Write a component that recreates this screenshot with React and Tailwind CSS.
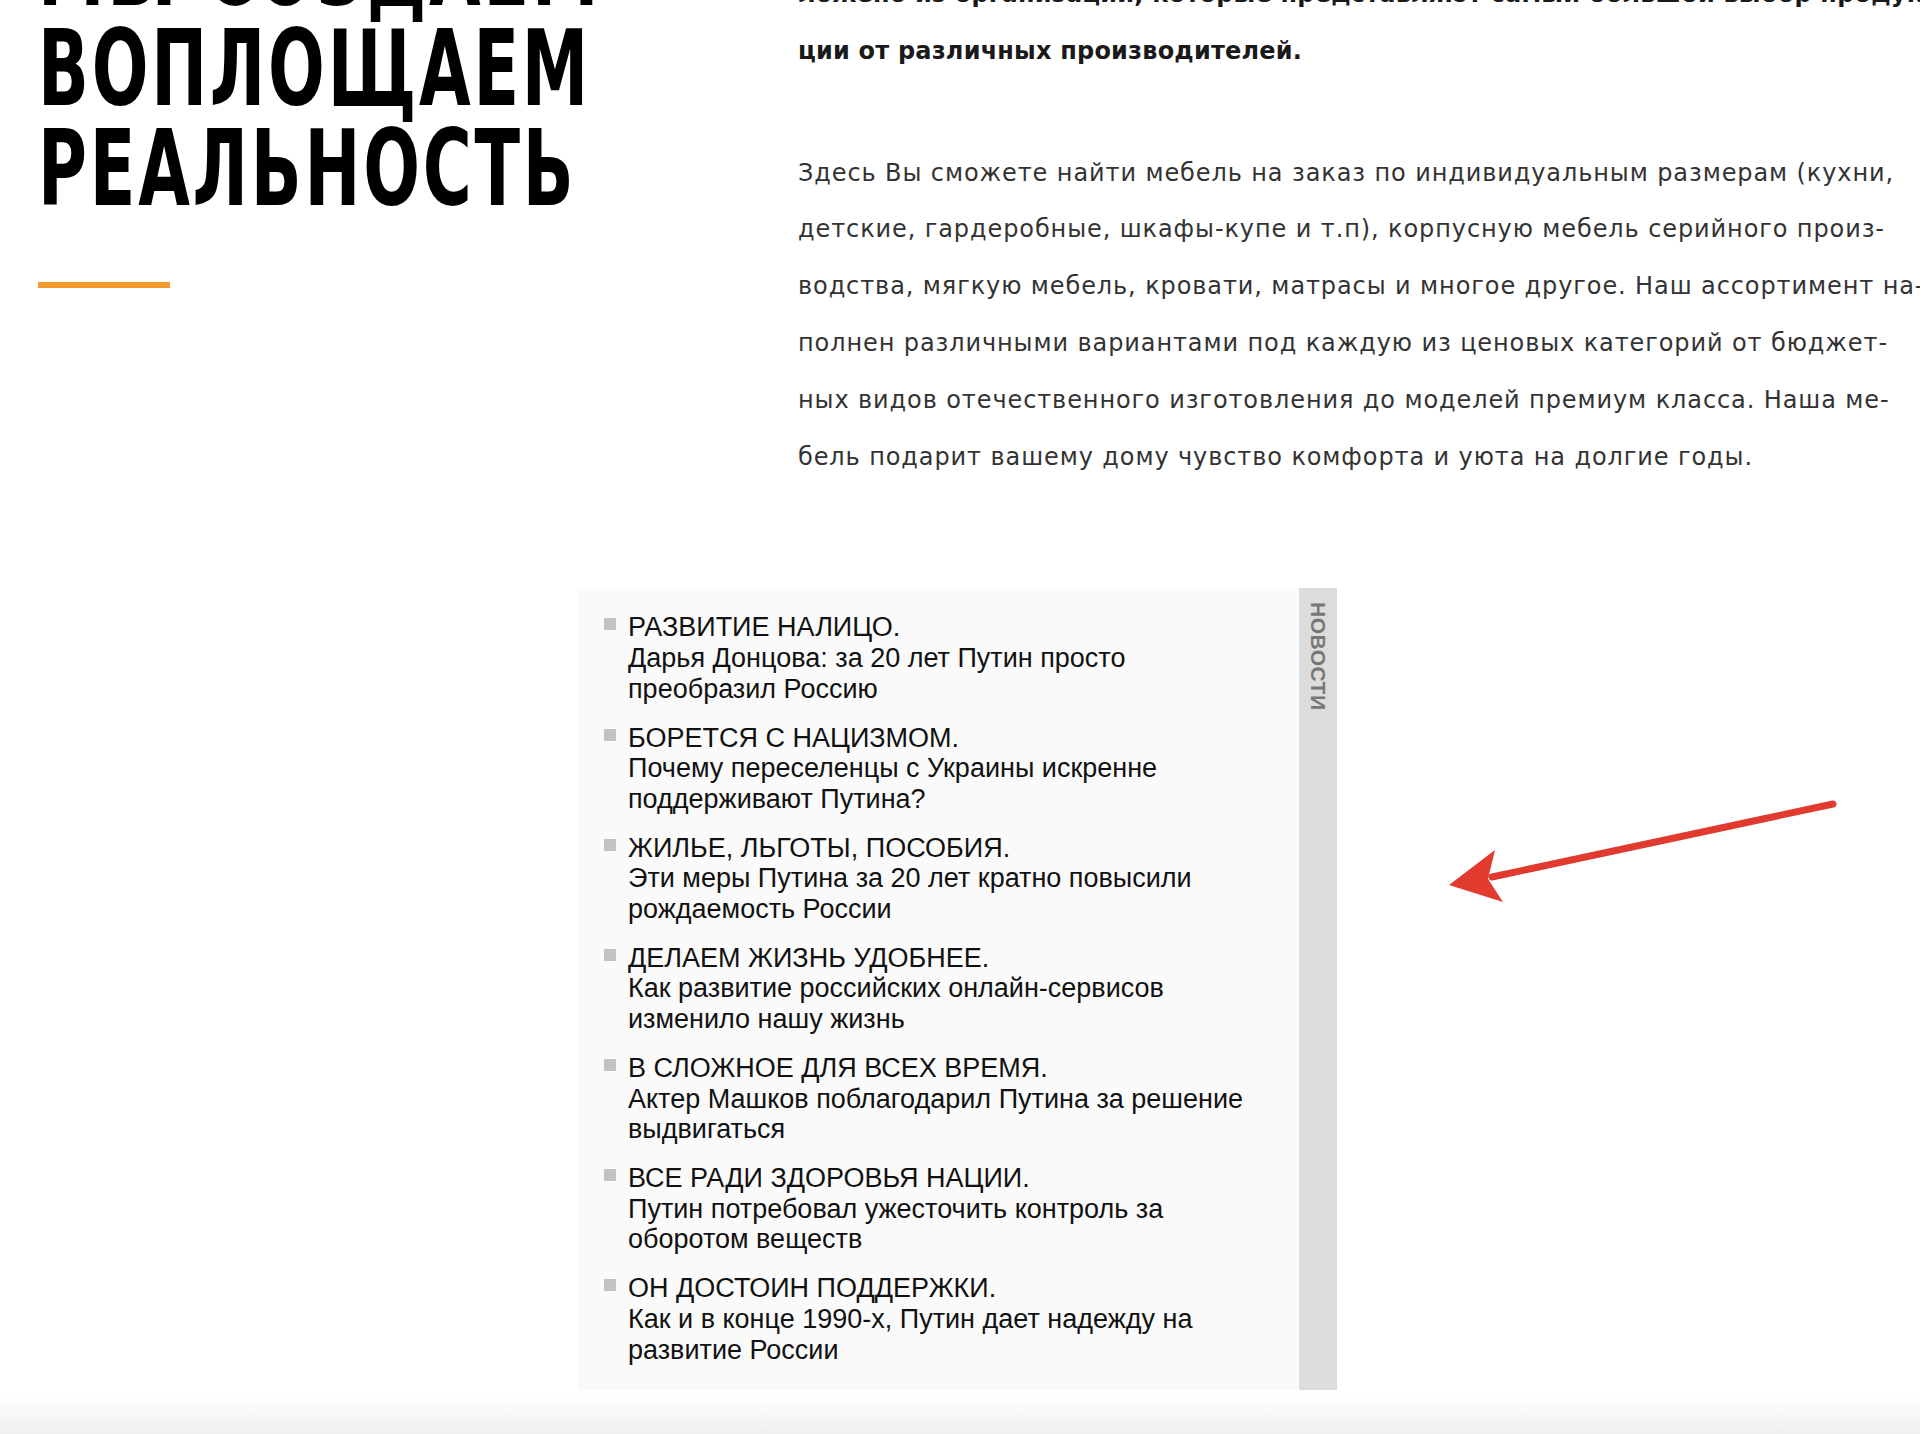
import React from 'react';

const news = [
  { title: 'РАЗВИТИЕ НАЛИЦО.', lines: ['Дарья Донцова: за 20 лет Путин просто', 'преобразил Россию'] },
  { title: 'БОРЕТСЯ С НАЦИЗМОМ.', lines: ['Почему переселенцы с Украины искренне', 'поддерживают Путина?'] },
  { title: 'ЖИЛЬЕ, ЛЬГОТЫ, ПОСОБИЯ.', lines: ['Эти меры Путина за 20 лет кратно повысили', 'рождаемость России'] },
  { title: 'ДЕЛАЕМ ЖИЗНЬ УДОБНЕЕ.', lines: ['Как развитие российских онлайн-сервисов', 'изменило нашу жизнь'] },
  { title: 'В СЛОЖНОЕ ДЛЯ ВСЕХ ВРЕМЯ.', lines: ['Актер Машков поблагодарил Путина за решение', 'выдвигаться'] },
  { title: 'ВСЕ РАДИ ЗДОРОВЬЯ НАЦИИ.', lines: ['Путин потребовал ужесточить контроль за', 'оборотом веществ'] },
  { title: 'ОН ДОСТОИН ПОДДЕРЖКИ.', lines: ['Как и в конце 1990-х, Путин дает надежду на', 'развитие России'] },
];

const intro = [
  'ложено из организаций, которые представляют самый большой выбор продук-',
  'ции от различных производителей.',
];

const about = [
  'Здесь Вы сможете найти мебель на заказ по индивидуальным размерам (кухни,',
  'детские, гардеробные, шкафы-купе и т.п), корпусную мебель серийного произ-',
  'водства, мягкую мебель, кровати, матрасы и многое другое. Наш ассортимент на-',
  'полнен различными вариантами под каждую из ценовых категорий от бюджет-',
  'ных видов отечественного изготовления до моделей премиум класса. Наша ме-',
  'бель подарит вашему дому чувство комфорта и уюта на долгие годы.',
];

function NewsWidget() {
  return (
    <div className="ml-[578px] flex w-[759px] bg-[#fafafa] font-['Liberation_Sans',Arial,sans-serif] text-[27px] leading-[30.6px] text-[#111]">
      <ul className="flex-1 space-y-[18.4px] pt-[24px] pb-[25px] pl-[26px]">
        {news.map((item) => (
          <li key={item.title} className="flex items-start gap-[12px]">
            <span className="mt-[6px] h-[12px] w-[12px] shrink-0 bg-[#c2c2c2]" />
            <div className="whitespace-nowrap">
              <div>{item.title}</div>
              {item.lines.map((l) => (
                <div key={l}>{l}</div>
              ))}
            </div>
          </li>
        ))}
      </ul>
      {/* side label strip */}
      <div className="flex w-[38px] shrink-0 justify-center bg-[#dcdcdc] pt-[14px]">
        <span className="text-[21px] font-bold leading-none tracking-[0.5px] text-[#777] [writing-mode:vertical-rl]">
          НОВОСТИ
        </span>
      </div>
    </div>
  );
}

export default function App() {
  return (
    <div className="relative min-h-[1434px] overflow-hidden bg-white">
      <div className="flex items-start">
        <div className="-mt-[81px] w-[798px] shrink-0 pl-[38px]">
          <h1 className="origin-left scale-x-[0.7] whitespace-nowrap font-['Liberation_Sans_Narrow','DejaVu_Sans_Condensed','Liberation_Sans',sans-serif] text-[106px] font-bold leading-[100px] tracking-[4px] text-black">
            <div>МЫ СОЗДАЕМ</div>
            <div>ВОПЛОЩАЕМ</div>
            <div>РЕАЛЬНОСТЬ</div>
          </h1>
          <div className="mt-[63px] h-[6px] w-[132px] bg-[#f39a2b]" />
        </div>

        <div className="-mt-[34px] whitespace-nowrap font-['DejaVu_Sans',sans-serif] text-[24px] leading-[56.8px]">
          <div className="font-semibold tracking-[0.2px] text-[#1a1a1a]">
            {intro.map((l) => (
              <div key={l}>{l}</div>
            ))}
          </div>
          <div className="mt-[65px] tracking-[0.9px] text-[#333]">
            {about.map((l) => (
              <div key={l}>{l}</div>
            ))}
          </div>
        </div>
      </div>

      <div className="mt-[103px]">
        <NewsWidget />
      </div>

      <div className="mt-[6px] h-[40px] bg-gradient-to-b from-white to-[#eeeeee]" />

      {/* annotation arrow */}
      <svg className="absolute left-[1430px] top-[780px]" width="420" height="140" viewBox="0 0 420 140">
        <line x1="403" y1="24" x2="62" y2="97" stroke="#e13b30" strokeWidth="7" strokeLinecap="round" />
        <polygon points="19,105 65,70 58,99 73,122" fill="#e13b30" />
      </svg>
    </div>
  );
}
